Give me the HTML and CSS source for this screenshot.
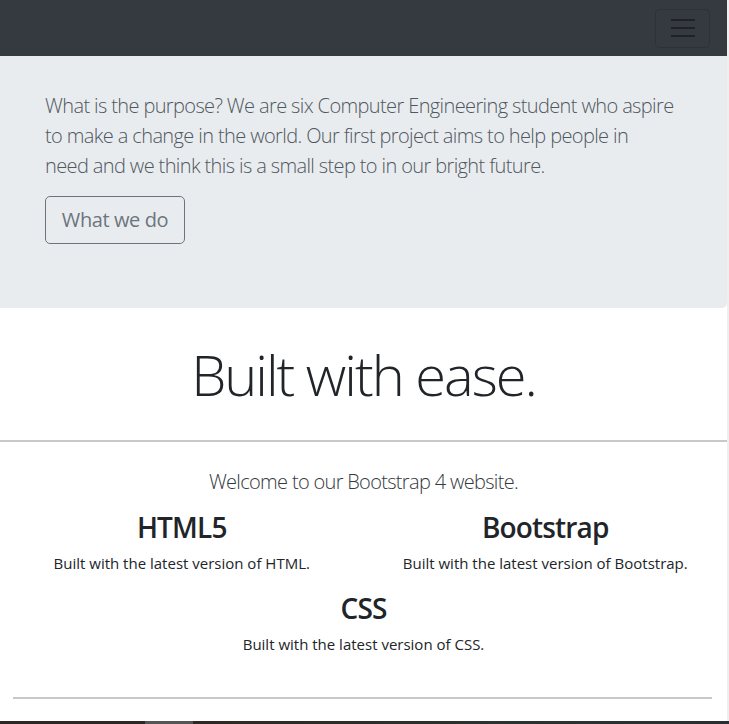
FILE: index.html
```html
<!DOCTYPE html>
<html lang="en">
<head>
<meta charset="utf-8">
<title>Built with ease</title>
<link rel="stylesheet" href="styles.css">
</head>
<body>
<div class="page">
  <nav class="navbar">
    <button class="toggler" type="button" aria-label="Toggle navigation">
      <span class="bar"></span><span class="bar"></span><span class="bar"></span>
    </button>
  </nav>
  <section class="jumbotron">
    <p class="lead">What is the purpose? We are six Computer Engineering student who aspire<br>to make a change in the world. Our first project aims to help people in<br>need and we think this is a small step to in our bright future.</p>
    <a class="btn-outline" href="#">What we do</a>
  </section>
  <section class="welcome">
    <h1 class="display">Built with ease.</h1>
    <hr class="rule-full">
    <p class="welcome-lead">Welcome to our Bootstrap 4 website.</p>
    <div class="features">
      <div class="feature">
        <h3>HTML5</h3>
        <p>Built with the latest version of HTML.</p>
      </div>
      <div class="feature">
        <h3>Bootstrap</h3>
        <p>Built with the latest version of Bootstrap.</p>
      </div>
      <div class="feature feature-wide">
        <h3>CSS</h3>
        <p>Built with the latest version of CSS.</p>
      </div>
    </div>
    <hr class="rule-inset">
  </section>
</div>
<div class="taskbar"><span class="task-a"></span><span class="task-b"></span><span class="task-c"></span></div>
</body>
</html>
```
FILE: styles.css
```css
html { background: #efefef; }
body {
  margin: 0;
  font-family: "Open Sans", "Noto Sans", sans-serif;
  color: #212529;
}
.page {
  width: 727px;
  background: #fff;
  min-height: 724px;
}
.navbar {
  height: 56px;
  background: #343a40;
  display: flex;
  justify-content: flex-end;
  align-items: center;
  padding: 0 17px 0 0;
}
.toggler {
  width: 55px;
  height: 39px;
  background: transparent;
  border: 1px solid rgba(0,0,0,0.12);
  border-radius: 4px;
  display: flex;
  flex-direction: column;
  align-items: center;
  justify-content: center;
  gap: 6px;
  padding: 0;
}
.bar {
  display: block;
  width: 24px;
  height: 2px;
  background: #1f2328;
}
.jumbotron {
  background: #e9ecef;
  padding: 35px 30px 64px 45px;
  border-bottom-right-radius: 5px;
}
.lead {
  margin: 0 0 15px;
  font-size: 20px;
  font-weight: 300;
  line-height: 30px;
  letter-spacing: -0.031em;
  color: #4f5860;
}
.btn-outline {
  display: inline-block;
  box-sizing: border-box;
  height: 48px;
  width: 140px;
  line-height: 46px;
  text-align: center;
  font-size: 20px;
  letter-spacing: -0.02em;
  color: #6c757d;
  border: 1px solid #6c757d;
  border-radius: 5px;
  text-decoration: none;
}
.welcome { text-align: center; }
.display {
  margin: 0;
  padding-top: 33px;
  font-size: 56px;
  font-weight: 300;
  line-height: 67px;
  letter-spacing: -0.036em;
  color: #212529;
  box-sizing: border-box;
  height: 132px;
}
hr { border: 0; height: 2px; background: #c8c8c8; margin: 0; }
.rule-full { width: 100%; }
.welcome-lead {
  margin: 25px 0 0;
  font-size: 20px;
  font-weight: 300;
  line-height: 30px;
  letter-spacing: -0.034em;
  color: #34393e;
}
.features {
  display: grid;
  grid-template-columns: 1fr 1fr;
  margin-top: 13px;
}
.feature h3 {
  margin: 0;
  font-size: 28px;
  font-weight: 600;
  line-height: 34px;
  letter-spacing: -0.03em;
}
.feature p {
  margin: 7px 0 16px;
  font-size: 15px;
  line-height: 24px;
}
.feature-wide { grid-column: 1 / 3; }
.rule-inset { margin: 25px 15px 0 13px; }
.taskbar {
  position: fixed;
  left: 0; right: 0; bottom: 0;
  height: 3px;
  background: #2b2724;
  display: flex;
}
.task-a { width: 145px; }
.task-b { width: 48px; background: #555; }
.task-c { flex: 1; background: linear-gradient(90deg, #2e2824, #2b3330 60%, #2a2e30); }
```
